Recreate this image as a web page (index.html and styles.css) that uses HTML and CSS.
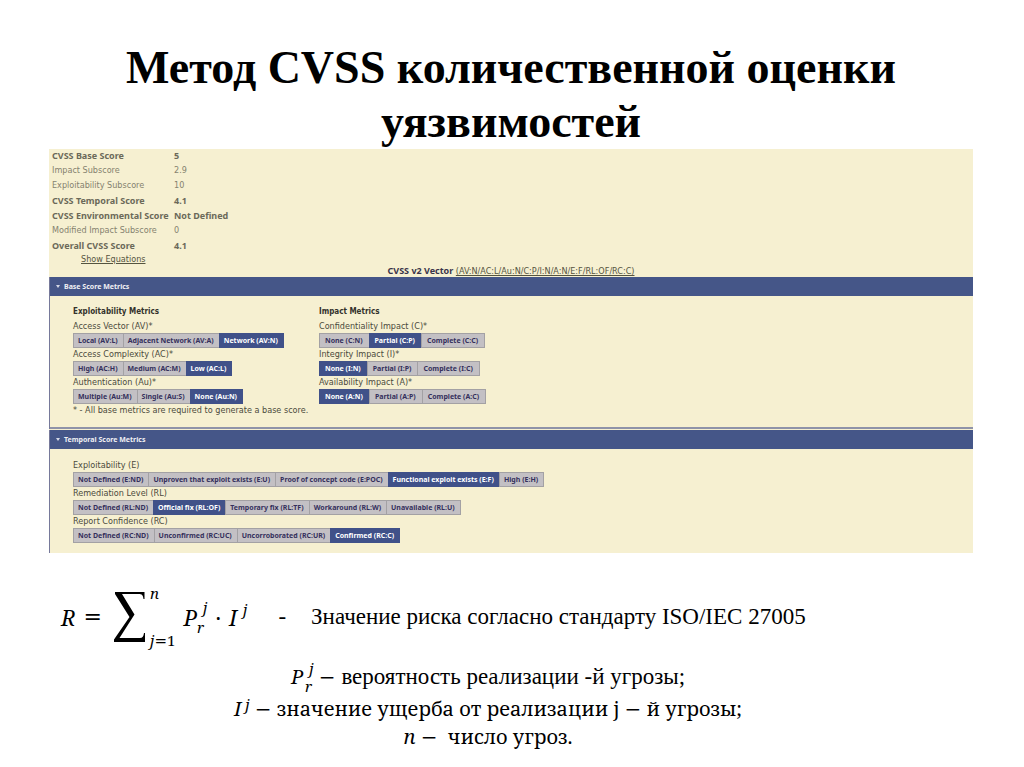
FILE: index.html
```
<!DOCTYPE html>
<html lang="ru">
<head>
<meta charset="utf-8">
<meta name="viewport" content="width=device-width, initial-scale=1">
<title>Метод CVSS количественной оценки уязвимостей</title>
<link rel="stylesheet" href="styles.css">
</head>
<body>
<main class="slide">
  <h1 class="title">Метод CVSS количественной оценки уязвимостей</h1>

  <section class="calculator" lang="en">
    <table class="scores">
      <tbody>
        <tr class="strong"><th scope="row">CVSS Base Score</th><td>5</td></tr>
        <tr><th scope="row">Impact Subscore</th><td>2.9</td></tr>
        <tr><th scope="row">Exploitability Subscore</th><td>10</td></tr>
        <tr class="strong"><th scope="row">CVSS Temporal Score</th><td>4.1</td></tr>
        <tr class="strong"><th scope="row">CVSS Environmental Score</th><td>Not Defined</td></tr>
        <tr><th scope="row">Modified Impact Subscore</th><td>0</td></tr>
        <tr class="strong"><th scope="row">Overall CVSS Score</th><td>4.1</td></tr>
      </tbody>
    </table>
    <a class="equations" href="#equations">Show Equations</a>
    <p class="vector"><b>CVSS v2 Vector</b> <a href="#vector">(AV:N/AC:L/Au:N/C:P/I:N/A:N/E:F/RL:OF/RC:C)</a></p>

    <section class="group">
      <button class="bar" type="button" aria-expanded="true"><span class="caret"></span>Base Score Metrics</button>
      <div class="group-body base">
        <div class="columns">
          <div class="column">
            <h2>Exploitability Metrics</h2>
            <p class="label" id="av">Access Vector (AV)*</p>
            <div class="options" role="group" aria-labelledby="av"><button type="button">Local (AV:L)</button><button type="button">Adjacent Network (AV:A)</button><button type="button" class="on" aria-pressed="true">Network (AV:N)</button></div>
            <p class="label" id="ac">Access Complexity (AC)*</p>
            <div class="options" role="group" aria-labelledby="ac"><button type="button">High (AC:H)</button><button type="button">Medium (AC:M)</button><button type="button" class="on" aria-pressed="true">Low (AC:L)</button></div>
            <p class="label" id="au">Authentication (Au)*</p>
            <div class="options" role="group" aria-labelledby="au"><button type="button">Multiple (Au:M)</button><button type="button">Single (Au:S)</button><button type="button" class="on" aria-pressed="true">None (Au:N)</button></div>
          </div>
          <div class="column">
            <h2>Impact Metrics</h2>
            <p class="label" id="c">Confidentiality Impact (C)*</p>
            <div class="options wide" role="group" aria-labelledby="c"><button type="button">None (C:N)</button><button type="button" class="on" aria-pressed="true">Partial (C:P)</button><button type="button">Complete (C:C)</button></div>
            <p class="label" id="i">Integrity Impact (I)*</p>
            <div class="options wide" role="group" aria-labelledby="i"><button type="button" class="on" aria-pressed="true">None (I:N)</button><button type="button">Partial (I:P)</button><button type="button">Complete (I:C)</button></div>
            <p class="label" id="a">Availability Impact (A)*</p>
            <div class="options wide" role="group" aria-labelledby="a"><button type="button" class="on" aria-pressed="true">None (A:N)</button><button type="button">Partial (A:P)</button><button type="button">Complete (A:C)</button></div>
          </div>
        </div>
        <p class="label note">* - All base metrics are required to generate a base score.</p>
      </div>
    </section>

    <section class="group">
      <button class="bar" type="button" aria-expanded="true"><span class="caret"></span>Temporal Score Metrics</button>
      <div class="group-body temporal">
        <p class="label" id="e">Exploitability (E)</p>
        <div class="options" role="group" aria-labelledby="e"><button type="button">Not Defined (E:ND)</button><button type="button">Unproven that exploit exists (E:U)</button><button type="button">Proof of concept code (E:POC)</button><button type="button" class="on" aria-pressed="true">Functional exploit exists (E:F)</button><button type="button">High (E:H)</button></div>
        <p class="label" id="rl">Remediation Level (RL)</p>
        <div class="options" role="group" aria-labelledby="rl"><button type="button">Not Defined (RL:ND)</button><button type="button" class="on" aria-pressed="true">Official fix (RL:OF)</button><button type="button">Temporary fix (RL:TF)</button><button type="button">Workaround (RL:W)</button><button type="button">Unavailable (RL:U)</button></div>
        <p class="label" id="rc">Report Confidence (RC)</p>
        <div class="options" role="group" aria-labelledby="rc"><button type="button">Not Defined (RC:ND)</button><button type="button">Unconfirmed (RC:UC)</button><button type="button">Uncorroborated (RC:UR)</button><button type="button" class="on" aria-pressed="true">Confirmed (RC:C)</button></div>
      </div>
    </section>
  </section>

  <section class="risk">
    <div class="formula">
      <i>R</i>
      <span class="op">=</span>
      <span class="sum">
        <svg class="sigma" viewBox="0 0 32 50" role="img" aria-label="Сумма"><path d="M1 0H30.500V7H29.500C29 3 28 2 24.500 2H8L20.500 22.500L5.500 46H26C28.500 46 29.500 44.500 30 41H31V50H0V47.500L15.500 25L1 2Z"/></svg>
        <span class="limits"><i>n</i><span><i>j</i><span class="op">=</span>1</span></span>
      </span>
      <span class="term"><i>P</i><span class="scripts"><i class="up">j</i><i>r</i></span></span>
      <span>·</span>
      <span class="term"><i>I</i><span class="scripts single"><i>j</i></span></span>
    </div>
    <span class="dash">-</span>
    <p class="meaning">Значение риска согласно стандарту ISO/IEC 27005</p>
  </section>

  <section class="legend">
    <p><span class="math"><span class="term"><i>P</i><span class="scripts"><i class="up">j</i><i>r</i></span></span> <span class="op">−</span></span> вероятность реализации -й угрозы;</p>
    <p class="math"><span class="term"><i>I</i><span class="scripts single"><i>j</i></span></span> <span class="op">−</span> значение ущерба от реализации j <span class="op">−</span> й угрозы;</p>
    <p class="math"><i>n</i> <span class="op">−</span>&nbsp; число угроз.</p>
  </section>
</main>
</body>
</html>
```
FILE: styles.css
```
* { box-sizing: border-box; }
body {
  margin: 0;
  background: #fff;
  color: #000;
  font-family: "Liberation Serif", serif;
}
p, h1, h2 { margin: 0; }
button { font: inherit; border: 0; margin: 0; }

.slide { padding: 41px 51px 0 49px; }
.title {
  padding: 0 60px;
  font-size: 46px;
  line-height: 54px;
  text-align: center;
}

/* Score calculator */
.calculator {
  background: #f6f0d1;
  font: 9px/13px "DejaVu Sans Condensed", "DejaVu Sans", sans-serif;
  color: #4b4a3c;
}
.scores { border-collapse: collapse; color: #85826f; }
.scores th, .scores td {
  height: 15px;
  padding: 0 0 2px 3px;
  font-weight: normal;
  text-align: left;
  line-height: 13px;
}
.scores th { width: 122px; white-space: nowrap; }
.scores .strong th, .scores .strong td {
  font-family: "Noto Sans", sans-serif;
  font-weight: bold;
  color: #6b6959;
}
.calculator a { color: #55543f; }
.equations { display: block; width: max-content; margin-left: 32px; line-height: 11px; }
.vector { text-align: center; line-height: 11px; }
.vector b { font-family: "Noto Sans", sans-serif; color: #39344a; }

.group { border-left: 1px solid #76799a; }
.group + .group { margin-top: 1px; }
.bar {
  display: flex;
  align-items: center;
  gap: 4px;
  width: 100%;
  height: 19px;
  padding: 0 6px;
  background: #455688;
  color: #f0f0f4;
  font: bold 7px/13px "Noto Sans", sans-serif;
}
.caret {
  border: 2px solid transparent;
  border-top: 3px solid #d5d9e6;
  border-bottom: 0;
}
.group-body { padding-left: 23px; }
.base {
  padding-top: 9px;
  padding-bottom: 10px;
  border-bottom: 2px solid #8f93a8;
}
.temporal { padding-top: 10px; padding-bottom: 10px; }
.columns { display: grid; grid-template-columns: 246px 1fr; }
.calculator h2 {
  margin-bottom: 2px;
  font: bold 8px/13px "DejaVu Sans Condensed", "DejaVu Sans", sans-serif;
  color: #33322c;
}
.label { line-height: 13px; }
.options { display: flex; height: 15px; }
.options button {
  padding: 0 5px 0 4px;
  border: 1px solid #a3a1a4;
  border-right-width: 0;
  background: #c3c0c4;
  color: #35305c;
  font: bold 7px/13px "Noto Sans", sans-serif;
  white-space: nowrap;
}
.options.wide button { padding: 0 6px 0 5px; }
.options button:last-child { border-right-width: 1px; }
.options .on { background: #405189; border-color: #405189; color: #fff; }

/* Risk formula */
.risk {
  display: flex;
  align-items: center;
  padding: 30px 0 0 12px;
  font-size: 23px;
  line-height: 28px;
}
.formula, .math { font-family: "Noto Serif", "Liberation Serif", serif; }
.formula { display: flex; align-items: center; gap: 8px; font-size: 22px; }
.math { font-size: 20px; }
.op { font-family: "DejaVu Sans", sans-serif; }
.sum { display: flex; align-items: center; gap: 4px; padding-left: 4px; }
.sigma { width: 32px; height: 50px; }
.limits {
  display: flex;
  flex-direction: column;
  justify-content: space-between;
  height: 68px;
  font-size: 15px;
  line-height: 20px;
}
.term { display: inline-flex; align-items: center; }
.scripts {
  display: inline-flex;
  flex-direction: column;
  height: 40px;
  font-size: 15px;
  line-height: 20px;
}
.scripts .up { padding-left: 6px; }
.scripts.single { height: 36px; padding-left: 4px; }
.formula .single { padding-left: 6px; }
.dash { padding: 0 25px 0 31px; }

.legend {
  padding-top: 8px;
  margin-right: 46px;
  text-align: center;
  font-size: 23px;
  line-height: 28px;
}
.legend .scripts { height: 36px; line-height: 18px; }
.legend .scripts.single { height: 28px; }
```
